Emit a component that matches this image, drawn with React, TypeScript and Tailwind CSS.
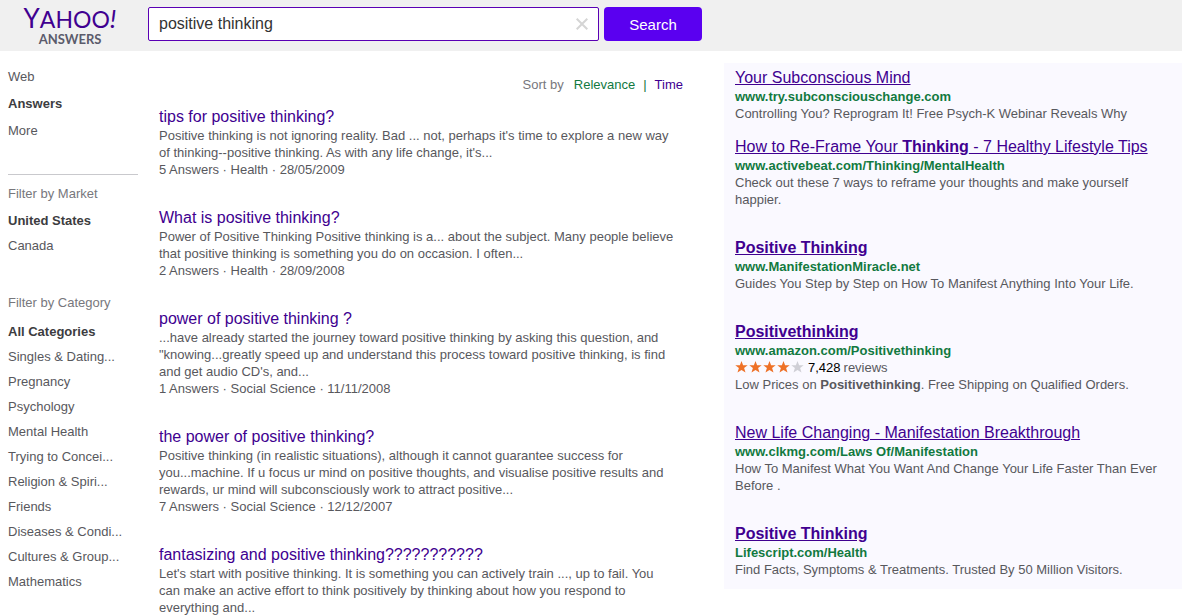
import { Fragment, useState } from 'react'

const navLinks = [
  { name: 'Web', active: false },
  { name: 'Answers', active: true },
  { name: 'More', active: false },
]

const markets = ['United States', 'Canada']

const categories = [
  'All Categories',
  'Singles & Dating...',
  'Pregnancy',
  'Psychology',
  'Mental Health',
  'Trying to Concei...',
  'Religion & Spiri...',
  'Friends',
  'Diseases & Condi...',
  'Cultures & Group...',
  'Mathematics',
]

const results = [
  {
    title: 'tips for positive thinking?',
    lines: [
      "Positive thinking is not ignoring reality. Bad ... not, perhaps it's time to explore a new way",
      "of thinking--positive thinking. As with any life change, it's...",
    ],
    meta: '5 Answers · Health · 28/05/2009',
  },
  {
    title: 'What is positive thinking?',
    lines: [
      'Power of Positive Thinking Positive thinking is a... about the subject. Many people believe',
      'that positive thinking is something you do on occasion. I often...',
    ],
    meta: '2 Answers · Health · 28/09/2008',
  },
  {
    title: 'power of positive thinking ?',
    lines: [
      '...have already started the journey toward positive thinking by asking this question, and',
      '"knowing...greatly speed up and understand this process toward positive thinking, is find',
      "and get audio CD's, and...",
    ],
    meta: '1 Answers · Social Science · 11/11/2008',
  },
  {
    title: 'the power of positive thinking?',
    lines: [
      'Positive thinking (in realistic situations), although it cannot guarantee success for',
      'you...machine. If u focus ur mind on positive thoughts, and visualise positive results and',
      'rewards, ur mind will subconsciously work to attract positive...',
    ],
    meta: '7 Answers · Social Science · 12/12/2007',
  },
  {
    title: 'fantasizing and positive thinking???????????',
    lines: [
      "Let's start with positive thinking. It is something you can actively train ..., up to fail. You",
      'can make an active effort to think positively by thinking about how you respond to',
      'everything and...',
    ],
    meta: '',
  },
]

const ads = [
  {
    title: <>Your Subconscious Mind</>,
    url: 'www.try.subconsciouschange.com',
    lines: [<>Controlling You? Reprogram It! Free Psych-K Webinar Reveals Why</>],
    compact: true,
  },
  {
    title: <>How to Re-Frame Your <b>Thinking</b> - 7 Healthy Lifestyle Tips</>,
    url: 'www.activebeat.com/Thinking/MentalHealth',
    lines: [<>Check out these 7 ways to reframe your thoughts and make yourself</>, <>happier.</>],
  },
  {
    title: <b>Positive Thinking</b>,
    url: 'www.ManifestationMiracle.net',
    lines: [<>Guides You Step by Step on How To Manifest Anything Into Your Life.</>],
  },
  {
    title: <b>Positivethinking</b>,
    url: 'www.amazon.com/Positivethinking',
    reviews: '7,428',
    lines: [<>Low Prices on <b>Positivethinking</b>. Free Shipping on Qualified Orders.</>],
  },
  {
    title: <>New Life Changing - Manifestation Breakthrough</>,
    url: 'www.clkmg.com/Laws Of/Manifestation',
    lines: [<>How To Manifest What You Want And Change Your Life Faster Than Ever</>, <>Before .</>],
  },
  {
    title: <b>Positive Thinking</b>,
    url: 'Lifescript.com/Health',
    lines: [<>Find Facts, Symptoms &amp; Treatments. Trusted By 50 Million Visitors.</>],
  },
]

const Star = ({ filled }: { filled: boolean }) => (
  <svg width="14" height="14" viewBox="0 0 14 14" className={filled ? 'text-[#ee7127]' : 'text-[#cfcfd6]'}>
    <path fill="currentColor" d="M6.5 0 8.1 4.2H12.7L9.1 7 10.5 11.6 6.5 8.9 2.5 11.6 3.9 7 .3 4.2H4.9z" />
  </svg>
)

const Logo = () => (
  <a href="#home" className="flex w-[140px] shrink-0 flex-col items-center pt-[5px] pr-4 font-[Lato]">
    <span className="text-[23px] leading-[27px] text-[#400090]">
      <span className="text-[26px]">Y</span>AHOO<i className="text-[26px]">!</i>
    </span>
    <span className="text-[13px] leading-[12px] font-bold text-[#5b5b6b]">ANSWERS</span>
  </a>
)

const Header = () => {
  const [query, setQuery] = useState('positive thinking')

  return (
    <header className="bg-[#f0f0f0]">
      <form className="flex h-[51px] items-start pl-2" onSubmit={(e) => e.preventDefault()}>
        <Logo />
        <div className="relative mt-[7px] w-[451px]">
          <input
            type="text"
            aria-label="Search answers"
            value={query}
            onChange={(e) => setQuery(e.target.value)}
            className="h-[34px] w-full rounded-xs border border-[#5a00b4] bg-white pr-8 pl-[10px] text-base text-[#333] outline-none"
          />
          <button
            type="button"
            aria-label="Clear"
            onClick={() => setQuery('')}
            className="absolute top-[11px] right-[11px]"
          >
            <svg width="12" height="12" viewBox="0 0 12 12" fill="none" stroke="#d5d5d5" strokeWidth="2">
              <path d="M.7.7l10.6 10.6M11.3.7.7 11.3" />
            </svg>
          </button>
        </div>
        <button type="submit" className="mt-[7px] ml-[5px] h-[34px] w-[98px] rounded-sm bg-[#5a00f0] text-[15px] text-white">
          Search
        </button>
      </form>
    </header>
  )
}

const Sidebar = () => (
  <aside className="w-[130px] shrink-0 pt-3 leading-[25px]">
    <nav className="flex flex-col leading-[27px]">
      {navLinks.map((link) => (
        <a key={link.name} href="#nav" className={link.active ? 'font-bold text-[#3c3c40]' : ''}>
          {link.name}
        </a>
      ))}
    </nav>
    <hr className="mt-[30px] mb-[6px] border-[#c9c9cd]" />
    <h2 className="text-[#77777c]">Filter by Market</h2>
    <ul className="mt-[2px]">
      {markets.map((name, i) => (
        <li key={name}>
          <a href="#market" className={i === 0 ? 'font-bold text-[#3c3c40]' : ''}>{name}</a>
        </li>
      ))}
    </ul>
    <h2 className="mt-8 text-[#77777c]">Filter by Category</h2>
    <ul className="mt-1">
      {categories.map((name, i) => (
        <li key={name}>
          <a href="#category" className={i === 0 ? 'font-bold text-[#3c3c40]' : ''}>{name}</a>
        </li>
      ))}
    </ul>
  </aside>
)

const Results = () => (
  <main className="ml-[21px] w-[524px] shrink-0 pt-[25px]">
    <div className="mb-[14px] flex justify-end text-[#77777c]">
      Sort by
      <a href="#relevance" className="ml-[10px] text-[#12793f]">Relevance</a>
      <span className="mx-2 text-[#12793f]">|</span>
      <a href="#time" className="text-[#400090]">Time</a>
    </div>
    <div className="flex flex-col gap-[30px]">
      {results.map((result) => (
        <article key={result.title}>
          <h3 className="text-base leading-5">
            <a href="#question" className="text-[#400090]">{result.title}</a>
          </h3>
          <p className="whitespace-nowrap">
            {result.lines.map((line) => (
              <Fragment key={line}>{line}<br /></Fragment>
            ))}
          </p>
          {result.meta && <p>{result.meta}</p>}
        </article>
      ))}
    </div>
  </main>
)

const Ads = () => (
  <aside className="mt-3 ml-[41px] min-w-0 flex-1 self-start bg-[#faf9ff] pt-[5px] pb-[11px] pl-[11px]">
    {ads.map((ad) => (
      <article key={ad.url} className={ad.compact ? 'mb-[15px]' : 'mb-[30px] last:mb-0'}>
        <h3 className="text-base leading-5">
          <a href="#ad" className="text-[#400090] underline">{ad.title}</a>
        </h3>
        <p className="font-bold text-[#12793f]">{ad.url}</p>
        {ad.reviews && (
          <p className="flex items-center">
            {[1, 2, 3, 4, 5].map((n) => (
              <Star key={n} filled={n < 5} />
            ))}
            <span className="mx-[3px] text-black">{ad.reviews}</span>reviews
          </p>
        )}
        <p className="whitespace-nowrap">
          {ad.lines.map((line, i) => (
            <Fragment key={i}>{line}<br /></Fragment>
          ))}
        </p>
      </article>
    ))}
  </aside>
)

const App = () => (
  <div className="h-screen overflow-hidden bg-white font-['Liberation_Sans',Arial,sans-serif] text-[13px] leading-[17px] text-[#58585d]">
    <Header />
    <div className="flex pl-2">
      <Sidebar />
      <Results />
      <Ads />
    </div>
  </div>
)

export default App
